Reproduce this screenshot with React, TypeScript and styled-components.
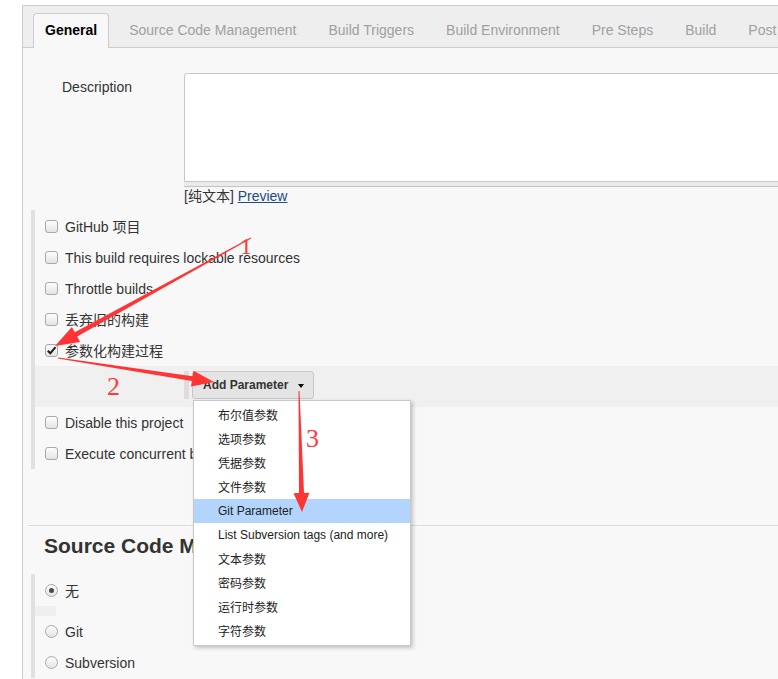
import React from "react";
import styled, { createGlobalStyle } from "styled-components";

const GlobalStyle = createGlobalStyle`
  html, body { margin: 0; padding: 0; background: #fff; overflow: hidden; }
  body {
    font-family: "Liberation Sans", Arial, "Noto Sans CJK SC", sans-serif;
    color: #333;
  }
  * { box-sizing: border-box; }
`;

const Page = styled.div`
  position: relative;
  width: 778px;
  height: 679px;
  overflow: hidden;
  padding: 5px 0 0 22px;
`;

const Panel = styled.div`
  width: 1100px;
  min-height: 720px;
  background: #f8f8f8;
  border-top: 1px solid #ccc;
  border-left: 1px solid #ccc;
`;

const TabBar = styled.div`
  display: flex;
  align-items: flex-end;
  gap: 8px;
  height: 42px;
  padding-left: 10px;
  background: #eee;
  border-bottom: 1px solid #ccc;
`;

const Tab = styled.div<{ $active?: boolean }>`
  height: 35px;
  margin-bottom: -1px;
  padding: 0 11px 2px;
  display: flex;
  align-items: center;
  font-size: 14px;
  white-space: nowrap;
  color: ${(p) => (p.$active ? "#000" : "#a0a0a0")};
  font-weight: ${(p) => (p.$active ? 700 : 400)};
  border: 1px solid ${(p) => (p.$active ? "#ccc" : "transparent")};
  border-bottom: none;
  border-radius: 4px 4px 0 0;
  background: ${(p) => (p.$active ? "#f8f8f8" : "transparent")};
`;

const Content = styled.div`
  padding-top: 25px;
`;

const FieldRow = styled.div`
  display: grid;
  grid-template-columns: 161px 1fr;
`;

const FieldLabel = styled.div`
  padding: 6px 0 0 39px;
  font-size: 14px;
  line-height: 16px;
`;

const TextArea = styled.textarea`
  display: block;
  width: 100%;
  height: 109px;
  margin: 0;
  border: 1px solid #c8c8c8;
  border-radius: 3px 3px 0 0;
  background: #fff;
  resize: none;
  outline: none;
`;

const Handle = styled.div`
  height: 5px;
  background: #ebebeb;
  border-bottom: 1px solid #c2c2ba;
`;

const PreviewLine = styled.div`
  margin-top: 1px;
  font-size: 14px;
  line-height: 16px;
`;

const PreviewLink = styled.a`
  color: #204a87;
  text-decoration: underline;
`;

const OptionGroup = styled.div<{ $top: number }>`
  margin: ${(p) => p.$top}px 0 0 8px;
  border-left: 4px solid #e0e0e0;
  padding-top: 1px;
`;

const OptionRow = styled.label`
  display: flex;
  align-items: center;
  gap: 7px;
  height: 31px;
  padding-left: 10px;
  font-size: 14px;
  line-height: 16px;
  white-space: nowrap;
`;

const Box = styled.span<{ $round?: boolean }>`
  width: 13px;
  height: 13px;
  flex: none;
  border: 1px solid #a9a9a9;
  border-radius: ${(p) => (p.$round ? "50%" : "3px")};
  background: linear-gradient(#fdfdfd, #e4e4e4);
  display: flex;
  align-items: center;
  justify-content: center;
`;

const Dot = styled.span`
  width: 5px;
  height: 5px;
  border-radius: 50%;
  background: #4a4a4a;
`;

const NestedBlock = styled.div`
  background: #f0f0f0;
  padding: 5px 0 8px 149px;
`;

const ParamInner = styled.div`
  display: flex;
  border-left: 5px solid #ddd;
  padding-left: 3px;
`;

const MenuAnchor = styled.div`
  position: relative;
`;

const AddButton = styled.div`
  display: flex;
  align-items: center;
  gap: 10px;
  height: 28px;
  padding: 0 9px 0 10px;
  background: #e4e4e4;
  border: 1px solid #c8c8c8;
  border-radius: 3px;
  font-size: 12px;
  font-weight: 700;
  color: #333;
  white-space: nowrap;
`;

const Caret = styled.span`
  width: 0;
  height: 0;
  border-left: 3.5px solid transparent;
  border-right: 3.5px solid transparent;
  border-top: 4px solid #000;
  margin-top: 1px;
`;

const Menu = styled.div`
  position: absolute;
  top: calc(100% + 1px);
  left: 1px;
  width: 218px;
  z-index: 5;
  background: #fff;
  border: 1px solid #c8c8c8;
  padding: 2px 0 2px;
  box-shadow: 2px 2px 4px rgba(0, 0, 0, 0.22);
`;

const MenuItem = styled.div<{ $hl?: boolean }>`
  height: 24px;
  display: flex;
  align-items: center;
  padding-left: 24px;
  padding-bottom: 1px;
  font-size: 12px;
  color: #222;
  white-space: nowrap;
  background: ${(p) => (p.$hl ? "#b3d4fc" : "transparent")};
`;

const SectionHeader = styled.div`
  margin: 56px 0 0 5px;
  border-top: 1px solid #ddd;
`;

const SectionTitle = styled.h2`
  margin: 0;
  padding: 8px 0 0 16px;
  font-size: 21px;
  line-height: 24px;
  font-weight: 700;
  color: #333;
`;

const EmptyBlock = styled.div`
  width: 21px;
  height: 10px;
  background: #efefef;
`;

const Overlay = styled.svg`
  position: absolute;
  left: 0;
  top: 0;
  z-index: 10;
  pointer-events: none;
`;

const Note = styled.span<{ $x: number; $y: number; $size: number }>`
  position: absolute;
  z-index: 11;
  left: ${(p) => p.$x}px;
  top: ${(p) => p.$y}px;
  font-family: "Liberation Serif", "Times New Roman", serif;
  font-size: ${(p) => p.$size}px;
  line-height: ${(p) => p.$size}px;
  color: #ff3a3a;
`;

const tabs = [
  "General",
  "Source Code Management",
  "Build Triggers",
  "Build Environment",
  "Pre Steps",
  "Build",
  "Post",
];

const menuItems = [
  "布尔值参数",
  "选项参数",
  "凭据参数",
  "文件参数",
  "Git Parameter",
  "List Subversion tags (and more)",
  "文本参数",
  "密码参数",
  "运行时参数",
  "字符参数",
];

function Check({ checked }: { checked?: boolean }) {
  return (
    <Box>
      {checked && (
        <svg width="11" height="11" viewBox="0 0 11 11">
          <path d="M1.8 5.8 L4.3 8.3 L9.5 2.2" fill="none" stroke="#1a1a1a" strokeWidth="2" />
        </svg>
      )}
    </Box>
  );
}

function Radio({ checked }: { checked?: boolean }) {
  return <Box $round>{checked && <Dot />}</Box>;
}

function arrowPoints(
  x1: number,
  y1: number,
  x2: number,
  y2: number,
  headLen: number,
  headW: number,
  neckW = 5,
  tailW = 1
) {
  const dx = x2 - x1;
  const dy = y2 - y1;
  const len = Math.hypot(dx, dy);
  const ux = dx / len;
  const uy = dy / len;
  const nx = -uy;
  const ny = ux;
  const kx = x2 - ux * headLen;
  const ky = y2 - uy * headLen;
  const pts: [number, number][] = [
    [x1 + (nx * tailW) / 2, y1 + (ny * tailW) / 2],
    [kx + (nx * neckW) / 2, ky + (ny * neckW) / 2],
    [kx + (nx * headW) / 2, ky + (ny * headW) / 2],
    [x2, y2],
    [kx - (nx * headW) / 2, ky - (ny * headW) / 2],
    [kx - (nx * neckW) / 2, ky - (ny * neckW) / 2],
    [x1 - (nx * tailW) / 2, y1 - (ny * tailW) / 2],
  ];
  return pts.map((p) => `${p[0].toFixed(1)},${p[1].toFixed(1)}`).join(" ");
}

export default function App() {
  return (
    <>
      <GlobalStyle />
      <Page>
        <Panel>
          <TabBar>
            {tabs.map((t, i) => (
              <Tab key={t} $active={i === 0}>
                {t}
              </Tab>
            ))}
          </TabBar>
          <Content>
            <FieldRow>
              <FieldLabel>Description</FieldLabel>
              <div>
                <TextArea />
                <Handle />
                <PreviewLine>
                  [纯文本] <PreviewLink href="#">Preview</PreviewLink>
                </PreviewLine>
              </div>
            </FieldRow>

            <OptionGroup $top={6}>
              <OptionRow>
                <Check />
                GitHub 项目
              </OptionRow>
              <OptionRow>
                <Check />
                This build requires lockable resources
              </OptionRow>
              <OptionRow>
                <Check />
                Throttle builds
              </OptionRow>
              <OptionRow>
                <Check />
                丢弃旧的构建
              </OptionRow>
              <OptionRow>
                <Check checked />
                参数化构建过程
              </OptionRow>
              <NestedBlock>
                <ParamInner>
                  <MenuAnchor>
                    <AddButton>
                      Add Parameter
                      <Caret />
                    </AddButton>
                    <Menu>
                      {menuItems.map((m, i) => (
                        <MenuItem key={m} $hl={i === 4}>
                          {m}
                        </MenuItem>
                      ))}
                    </Menu>
                  </MenuAnchor>
                </ParamInner>
              </NestedBlock>
              <OptionRow>
                <Check />
                Disable this project
              </OptionRow>
              <OptionRow>
                <Check />
                Execute concurrent builds if necessary
              </OptionRow>
            </OptionGroup>

            <SectionHeader>
              <SectionTitle>Source Code Management</SectionTitle>
            </SectionHeader>

            <OptionGroup $top={16}>
              <OptionRow>
                <Radio checked />无
              </OptionRow>
              <EmptyBlock />
              <OptionRow>
                <Radio />
                Git
              </OptionRow>
              <OptionRow>
                <Radio />
                Subversion
              </OptionRow>
            </OptionGroup>
          </Content>
        </Panel>

        <Overlay width="778" height="679" viewBox="0 0 778 679">
          <polygon points={arrowPoints(251, 238, 55, 346, 24, 17)} fill="#ff3434" />
          <polygon points={arrowPoints(58, 358, 214, 382, 22, 16)} fill="#ff3434" />
          <polygon points={arrowPoints(299, 391, 302, 512, 19, 16)} fill="#ff3434" />
        </Overlay>
        <Note $x={240} $y={234} $size={24}>
          1
        </Note>
        <Note $x={107} $y={374} $size={26}>
          2
        </Note>
        <Note $x={306} $y={426} $size={26}>
          3
        </Note>
      </Page>
    </>
  );
}
